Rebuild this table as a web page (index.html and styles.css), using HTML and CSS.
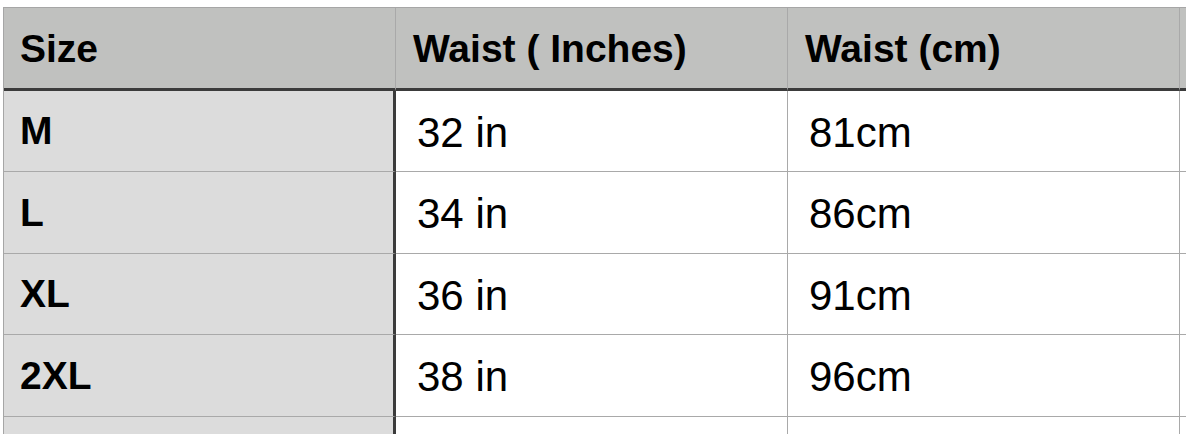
FILE: index.html
```html
<!DOCTYPE html>
<html lang="en">
<head>
<meta charset="utf-8">
<title>Size chart</title>
<link rel="stylesheet" href="styles.css">
</head>
<body>
<div class="frame">
  <table class="chart">
    <thead>
      <tr class="head-row">
        <th class="c1">Size</th>
        <th class="c2">Waist ( Inches)</th>
        <th class="c3">Waist (cm)</th>
        <th class="c4"></th>
      </tr>
    </thead>
    <tbody>
      <tr class="r-a">
        <td class="c1 size">M</td>
        <td class="c2 val">32 in</td>
        <td class="c3 val">81cm</td>
        <td class="c4"></td>
      </tr>
      <tr class="r-b">
        <td class="c1 size">L</td>
        <td class="c2 val">34 in</td>
        <td class="c3 val">86cm</td>
        <td class="c4"></td>
      </tr>
      <tr class="r-a">
        <td class="c1 size">XL</td>
        <td class="c2 val">36 in</td>
        <td class="c3 val">91cm</td>
        <td class="c4"></td>
      </tr>
      <tr class="r-b">
        <td class="c1 size">2XL</td>
        <td class="c2 val">38 in</td>
        <td class="c3 val">96cm</td>
        <td class="c4"></td>
      </tr>
      <tr class="r-c">
        <td class="c1 size"></td>
        <td class="c2 val"></td>
        <td class="c3 val"></td>
        <td class="c4"></td>
      </tr>
    </tbody>
  </table>
</div>
</body>
</html>
```

FILE: styles.css
```css
html, body {
  margin: 0;
  padding: 0;
  background: #ffffff;
  overflow: hidden;
}

.frame {
  box-sizing: border-box;
  width: 1186px;
  height: 434px;
  padding: 7px 0 0 3px;
  overflow: hidden;
}

.chart {
  border-collapse: separate;
  border-spacing: 0;
  border-top: 1px solid #a6a6a6;
  border-left: 1px solid #a6a6a6;
  font-family: "Liberation Sans", Arial, Helvetica, sans-serif;
  color: #000;
  table-layout: fixed;
  width: 1296px;
}

.chart th,
.chart td {
  padding: 0;
  vertical-align: middle;
  text-align: left;
  white-space: nowrap;
  box-sizing: border-box;
  border-right: 1px solid #a9a9a9;
  border-bottom: 1px solid #a9a9a9;
}

.c1 { width: 392px; }
.c2 { width: 392px; }
.c3 { width: 392px; }
.c4 { width: 120px; }

.head-row th {
  height: 83px;
  background: #c0c1bf;
  font-weight: bold;
  font-size: 39px;
  border-bottom: 3px solid #3b3b3b;
  padding-left: 17px;
  padding-top: 1px;
}

.head-row th.c1 {
  padding-left: 16px;
}

.chart td.size {
  background: #dcdcdc;
  font-weight: bold;
  font-size: 39px;
  padding-left: 16px;
  border-right: 3px solid #3b3b3b;
}

.chart td.val {
  font-size: 42px;
  padding-left: 21px;
  padding-top: 3px;
}

.r-a td { height: 81px; }
.r-b td { height: 82px; }
.r-c td { height: 40px; }
```
